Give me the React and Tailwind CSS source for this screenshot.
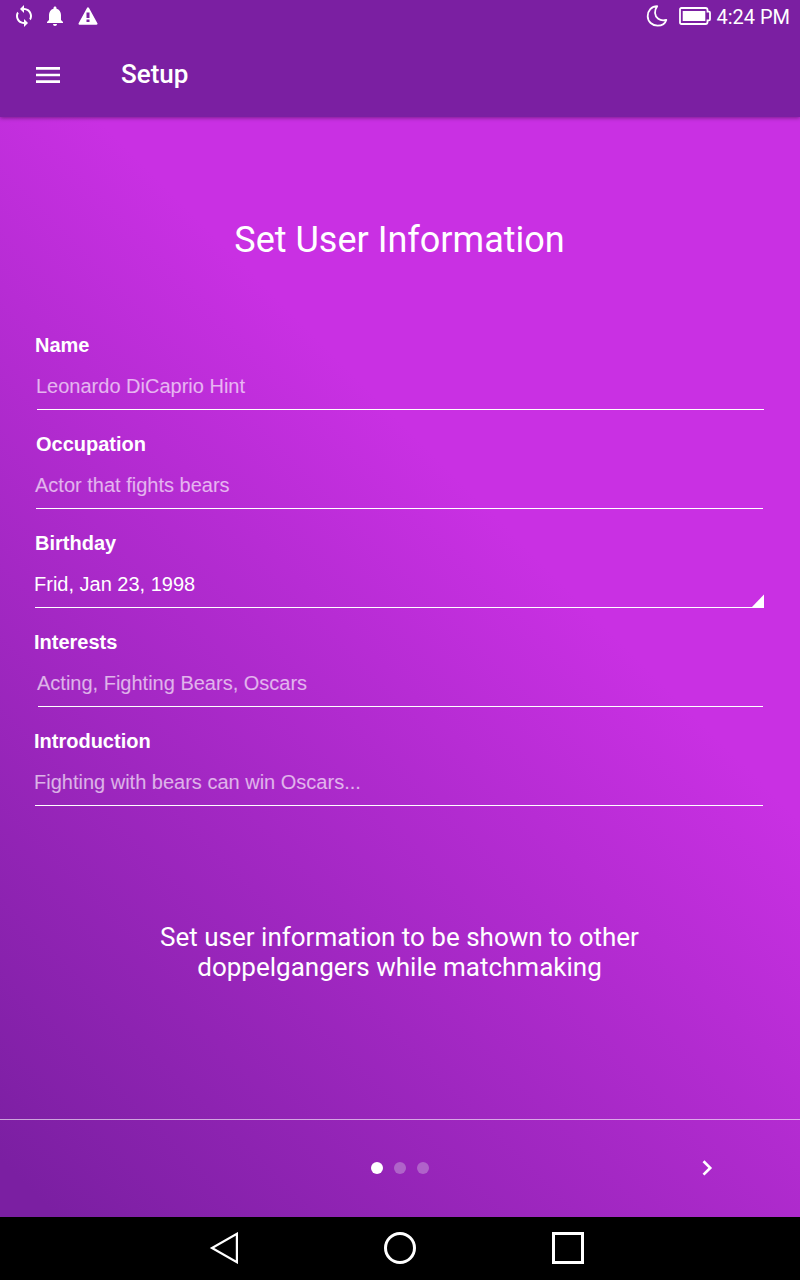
import React from "react";
import { MdSync, MdNotifications } from "react-icons/md";

const fields = [
  { label: "Name", value: "Leonardo DiCaprio Hint", labelPad: "pl-[35px]", valuePad: "pl-[36px]", line: "ml-[37px] mr-[36px]", tone: "text-white/65" },
  { label: "Occupation", value: "Actor that fights bears", labelPad: "pl-[36px]", valuePad: "pl-[35px]", line: "ml-[36px] mr-[37px]", tone: "text-white/65" },
  { label: "Birthday", value: "Frid, Jan 23, 1998", labelPad: "pl-[35px]", valuePad: "pl-[34px]", line: "ml-[35px] mr-[36px]", tone: "text-white", picker: true },
  { label: "Interests", value: "Acting, Fighting Bears, Oscars", labelPad: "pl-[34px]", valuePad: "pl-[37px]", line: "ml-[38px] mr-[37px]", tone: "text-white/65" },
  { label: "Introduction", value: "Fighting with bears can win Oscars...", labelPad: "pl-[34px]", valuePad: "pl-[34px]", line: "ml-[35px] mr-[37px]", tone: "text-white/65" },
];

function StatusBar() {
  return (
    <div className="flex h-8 items-center justify-between pl-3 pr-[10px]">
      <div className="flex items-center">
        <MdSync className="size-6" />
        <MdNotifications className="ml-[7px] size-6" />
        <svg className="ml-[11px] h-[18px] w-[20px]" viewBox="0 0 20 18">
          <path d="M10 1.300L18.500 16.700H1.500Z" fill="currentColor" stroke="currentColor" strokeWidth="2" strokeLinejoin="round" />
          <path d="M8.500 5.500H11.500V11H8.500ZM8.500 12.500H11.500V15H8.500Z" fill="#7b1fa2" />
        </svg>
      </div>
      <div className="flex items-center">
        <svg className="h-[24px] w-[24px]" viewBox="0 0 24 24" fill="none" stroke="currentColor" strokeWidth="1.8" strokeLinejoin="round">
          <path d="M12.200 2.200C6.500 2.200 2.700 6.800 2.700 12.200C2.700 17.700 7.200 21.700 12.600 21.700C16.600 21.700 20.200 19.500 21.300 15.900C18.500 16.800 15.600 16.600 13.200 14.800C9.300 11.800 9 6.500 12.200 2.200Z" />
        </svg>
        <svg className="ml-[10px] h-[18px] w-[32px]" viewBox="0 0 32 18" fill="none">
          <path d="M2.500 1H26.500Q28.500 1 28.500 3V4.700H30Q31 4.700 31 5.700V12.300Q31 13.300 30 13.300H28.500V15Q28.500 17 26.500 17H2.500Q1 17 1 15.500V2.500Q1 1 2.500 1Z" stroke="currentColor" strokeWidth="1.8" />
          <path d="M3.700 4H26.300V14H3.700Z" fill="currentColor" />
        </svg>
        <span className="mt-[2px] ml-[5px] text-[20px] leading-6">4:24 PM</span>
      </div>
    </div>
  );
}

function Field({ field }) {
  return (
    <div className="relative h-[99px]">
      <div className={`${field.labelPad} pt-[9px] text-[20px] leading-6 font-bold`}>{field.label}</div>
      <div className={`${field.valuePad} ${field.tone} pt-[17px] text-[20px] leading-6`}>{field.value}</div>
      <div className={`${field.line} mt-[11px] h-px bg-white`} />
      {field.picker && (
        <svg className="absolute top-[72px] right-9 h-[14px] w-[13px]" viewBox="0 0 13 14">
          <path d="M13 0.500V14H0Z" fill="white" />
        </svg>
      )}
    </div>
  );
}

export default function App() {
  return (
    <div className="flex h-[1280px] w-[800px] flex-col overflow-hidden font-['Roboto',sans-serif] text-white">
      <header className="z-10 h-[117px] shrink-0 bg-[#7b1fa2] shadow-[0_1px_4px_rgba(0,0,0,0.4)]">
        <StatusBar />
        <div className="flex h-[85px] items-center pl-9">
          <svg className="h-4 w-6" viewBox="0 0 24 16" fill="currentColor">
            <path d="M0 0H24V2.700H0ZM0 6.700H24V9.300H0ZM0 13.300H24V16H0Z" />
          </svg>
          <h1 className="mb-[2px] ml-[61px] text-[26px] leading-8 font-medium">Setup</h1>
        </div>
      </header>

      <main className="flex h-[1100px] shrink-0 flex-col bg-[linear-gradient(45deg,#7b1fa2_3%,#c930e3_63%)]">
        <h2 className="pt-[101px] pr-px text-center text-[36px] leading-[44px]">Set User Information</h2>
        <div className="mt-[62px] font-['Liberation_Sans',Arial,sans-serif]">
          {fields.map((field) => (
            <Field key={field.label} field={field} />
          ))}
        </div>
        <p className="mt-[103px] pr-px text-center text-[26px] leading-[30px]">
          Set user information to be shown to other
          <br />
          doppelgangers while matchmaking
        </p>
        <footer className="mt-auto grid h-[98px] grid-cols-3 items-center border-t border-white/60 pb-[2px]">
          <div className="col-start-2 flex justify-center gap-[11px]">
            <span className="size-3 rounded-full bg-white" />
            <span className="size-3 rounded-full bg-[#af64c9]" />
            <span className="size-3 rounded-full bg-[#b062ca]" />
          </div>
          <div className="flex justify-end pr-[87px]">
            <svg className="h-4 w-[11px]" viewBox="0 0 11 16" fill="none" stroke="currentColor" strokeWidth="2.700">
              <path d="M1.500 1.200L8.200 7.900L1.500 14.600" />
            </svg>
          </div>
        </footer>
      </main>

      <nav className="flex h-[63px] shrink-0 items-center bg-black pb-[1px] pl-[208px]">
        <svg className="h-8 w-8" viewBox="0 0 32 32" fill="none" stroke="white" strokeWidth="2.200">
          <path d="M28.900 1.800V30.200L4 16Z" />
        </svg>
        <span className="ml-[144px] size-8 rounded-full border-[3px] border-white" />
        <span className="ml-[136px] size-8 border-[3px] border-white" />
      </nav>
    </div>
  );
}
